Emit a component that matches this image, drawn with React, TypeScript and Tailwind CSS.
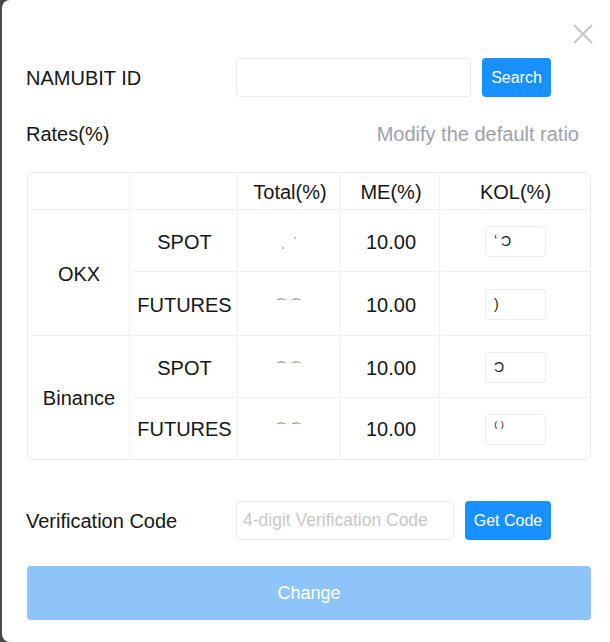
import React from "react";

const font = { fontFamily: '"Liberation Sans", Arial, sans-serif' };

type Row = { ex?: string; span?: boolean; type: string; total: string; me: string; kol: string; last?: boolean };

const rows: Row[] = [
  { ex: "OKX", span: true, type: "SPOT", total: "ˌ  ˈ", me: "10.00", kol: "ʻ Ɔ" },
  { type: "FUTURES", total: "⌒⌒", me: "10.00", kol: ")" },
  { ex: "Binance", span: true, type: "SPOT", total: "⌒⌒", me: "10.00", kol: "Ɔ" },
  { type: "FUTURES", total: "⌒⌒", me: "10.00", kol: "⁽ ⁾", last: true },
];

export default function App() {
  const cell = "flex items-center justify-center border-[#f0f0f0]";
  return (
    <div className="w-[610px] h-[642px] bg-[#4a4a4a] pl-[2px]" style={font}>
      <div className="relative h-full bg-white rounded-l-[8px] pl-[24px] pr-[17px] pt-[58px] text-[#161616]">
        <button className="absolute top-[24px] left-[571px] w-[20px] h-[20px]">
          <svg viewBox="0 0 20 20" width="20" height="20">
            <path d="M1 1L19 19M19 1L1 19" stroke="#c6c6c6" strokeWidth="2" fill="none" />
          </svg>
        </button>

        <div className="flex items-center h-[39px]">
          <div className="w-[210px] text-[20px]">NAMUBIT ID</div>
          <input className="w-[235px] h-[39px] border border-[#ebebeb] rounded-[4px] outline-none px-[7px]" />
          <button className="ml-[11px] w-[69px] h-[39px] bg-[#1890ff] text-white text-[16px] rounded-[4px]">Search</button>
        </div>

        <div className="flex items-center justify-between h-[28px] mt-[23px] text-[20px]">
          <span>Rates(%)</span>
          <span className="text-[#9ca2aa] mr-[14px]">Modify the default ratio</span>
        </div>

        <div className="mt-[24px] ml-[1px] w-[564px] border border-[#ebebeb] rounded-[6px] p-[1px] grid grid-cols-[101px_106px_101px_97px_147px] grid-rows-[36px_60px_62px_60px_58px] gap-[2px] text-[20px]">
          <div className={`${cell} border-r border-b`}></div>
          <div className={`${cell} border-r border-b`}></div>
          <div className={`${cell} border-r border-b`}>Total(%)</div>
          <div className={`${cell} border-r border-b`}>ME(%)</div>
          <div className={`${cell} border-b`}>KOL(%)</div>
          {rows.map((r, i) => (
            <React.Fragment key={i}>
              {r.span && (
                <div className={`${cell} row-span-2 border-r ${i === 0 ? "border-b" : ""}`}>{r.ex}</div>
              )}
              <div className={`${cell} border-r ${r.last ? "" : "border-b"}`}>{r.type}</div>
              <div className={`${cell} border-r ${r.last ? "" : "border-b"}`}>
                <span className="text-[13px] text-[#555] tracking-[2px]">{r.total}</span>
              </div>
              <div className={`${cell} border-r ${r.last ? "" : "border-b"}`}>{r.me}</div>
              <div className={`${cell} ${r.last ? "" : "border-b"}`}>
                <div className="w-[61px] h-[31px] border border-[#ededed] rounded-[4px] flex items-center px-[8px] text-[14px] text-[#222]">
                  {r.kol}
                </div>
              </div>
            </React.Fragment>
          ))}
        </div>

        <div className="flex items-center h-[39px] mt-[41px]">
          <div className="w-[210px] text-[20px]">Verification Code</div>
          <input
            className="w-[218px] h-[39px] border border-[#ebebeb] rounded-[4px] outline-none px-[6px] text-[17.5px] placeholder:text-[#c8c8c8]"
            placeholder="4-digit Verification Code"
          />
          <button className="ml-[11px] w-[86px] h-[39px] bg-[#1890ff] text-white text-[16px] rounded-[4px]">Get Code</button>
        </div>

        <button className="mt-[26px] ml-[1px] w-[564px] h-[54px] bg-[#8dc5fb] text-white text-[18px] rounded-[4px]">
          Change
        </button>
      </div>
    </div>
  );
}
